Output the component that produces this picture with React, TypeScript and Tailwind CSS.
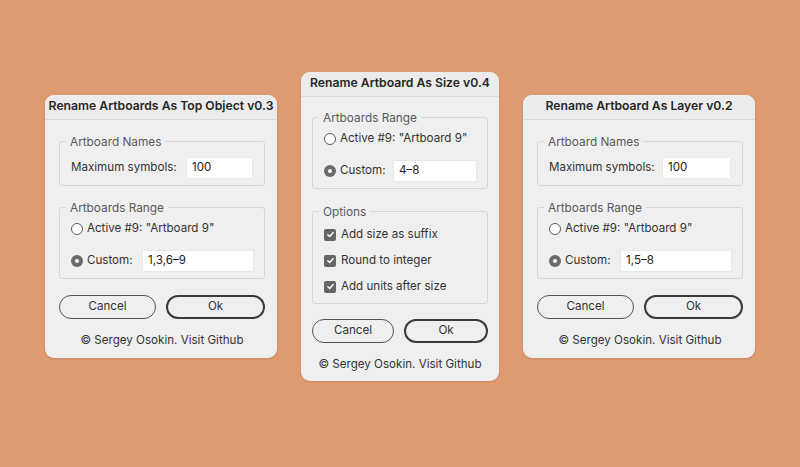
import type { ReactNode } from "react";

const font = { fontFamily: "Inter, 'Noto Sans', sans-serif" };

function Dialog({ title, width, children }: { title: string; width: string; children: ReactNode }) {
  return (
    <div className={`${width} rounded-[9px] bg-[#efefef] overflow-hidden shadow-[0_1px_3px_rgba(0,0,0,0.12)]`}>
      <div className="h-[25px] flex items-center justify-center border-b border-[#dadada] bg-[#ececec] text-[12.2px] font-semibold text-[#262626] whitespace-nowrap">
        {title}
      </div>
      {children}
    </div>
  );
}

function Panel({ label, children, className = "" }: { label: string; children: ReactNode; className?: string }) {
  return (
    <fieldset className={`border border-[#d5d5d5] rounded-[3px] px-[6px] ${className}`}>
      <legend className="px-[4px] text-[11.8px] leading-[16px] text-[#5a5a5a]">{label}</legend>
      <div className="pl-[5px]">{children}</div>
    </fieldset>
  );
}

function Radio({ checked }: { checked?: boolean }) {
  return checked ? (
    <span className="w-[12px] h-[12px] rounded-full bg-[#6a6a6a] flex items-center justify-center shrink-0">
      <span className="w-[4px] h-[4px] rounded-full bg-white" />
    </span>
  ) : (
    <span className="w-[12px] h-[12px] rounded-full border border-[#5c5c5c] bg-white shrink-0" />
  );
}

function Check() {
  return (
    <span className="w-[12px] h-[12px] rounded-[2px] bg-[#656565] flex items-center justify-center shrink-0">
      <svg width="9" height="9" viewBox="0 0 10 10">
        <path d="M2 5.2 L4.1 7.3 L8 2.8" fill="none" stroke="#fff" strokeWidth="1.6" strokeLinecap="round" strokeLinejoin="round" />
      </svg>
    </span>
  );
}

function Input({ value, className }: { value: string; className: string }) {
  return (
    <div className={`h-[20px] bg-white flex items-center px-[5px] text-[#222] shadow-[0_0_0_0.5px_#e2e2e2] ${className}`}>
      {value}
    </div>
  );
}

function Buttons() {
  return (
    <div className="flex gap-[10px]">
      <div className="flex-1 h-[24px] rounded-full border border-[#555] flex items-center justify-center text-[#333]">
        Cancel
      </div>
      <div className="flex-1 h-[24px] rounded-full border-2 border-[#3a3a3a] flex items-center justify-center text-[#333]">
        Ok
      </div>
    </div>
  );
}

function Footer() {
  return (
    <div className="mt-[13px] text-center leading-[16px] text-[#333]">© Sergey Osokin. Visit Github</div>
  );
}

function RangePanel({ value, inputClass }: { value: string; inputClass: string }) {
  return (
    <Panel label="Artboards Range" className="pb-[7px]">
      <div className="mt-[5px] flex items-center gap-[4px] h-[16px]">
        <Radio />
        <span>Active #9: "Artboard 9"</span>
      </div>
      <div className="mt-[14px] flex items-center h-[20px]">
        <Radio checked />
        <span className="ml-[4px]">Custom:</span>
        <Input value={value} className={inputClass} />
      </div>
    </Panel>
  );
}

function NamesPanel({ inputClass }: { inputClass: string }) {
  return (
    <Panel label="Artboard Names" className="pb-[7px]">
      <div className="mt-[8px] flex items-center h-[20px]">
        <span>Maximum symbols:</span>
        <Input value="100" className={inputClass} />
      </div>
    </Panel>
  );
}

export default function App() {
  return (
    <div
      className="w-[800px] h-[467px] bg-[#de9b71] flex items-center justify-center gap-[24px] pb-[15px] text-[11.6px] text-[#333]"
      style={font}
    >
      <Dialog title="Rename Artboards As Top Object v0.3" width="w-[232px]">
        <div className="pl-[14px] pr-[12px] pt-[14px] pb-[10px]">
          <NamesPanel inputClass="ml-auto w-[65px] mr-[6px]" />
          <div className="h-[14px]" />
          <RangePanel value="1,3,6–9" inputClass="ml-auto w-[110px] mr-[5px]" />
          <div className="h-[16px]" />
          <Buttons />
          <Footer />
        </div>
      </Dialog>

      <Dialog title="Rename Artboard As Size v0.4" width="w-[198px]">
        <div className="px-[11px] pt-[13px] pb-[9px]">
          <RangePanel value="4–8" inputClass="ml-auto w-[82px] mr-[5px]" />
          <div className="h-[15px]" />
          <Panel label="Options" className="pb-[8px]">
            <div className="mt-[7px] flex flex-col gap-[10px]">
              {["Add size as suffix", "Round to integer", "Add units after size"].map((t) => (
                <div key={t} className="flex items-center gap-[5px] h-[16px]">
                  <Check />
                  <span>{t}</span>
                </div>
              ))}
            </div>
          </Panel>
          <div className="h-[15px]" />
          <Buttons />
          <Footer />
        </div>
      </Dialog>

      <Dialog title="Rename Artboard As Layer v0.2" width="w-[232px]">
        <div className="pl-[14px] pr-[12px] pt-[14px] pb-[10px]">
          <NamesPanel inputClass="ml-auto w-[67px] mr-[6px]" />
          <div className="h-[14px]" />
          <RangePanel value="1,5–8" inputClass="ml-auto w-[110px] mr-[5px]" />
          <div className="h-[16px]" />
          <Buttons />
          <Footer />
        </div>
      </Dialog>
    </div>
  );
}
